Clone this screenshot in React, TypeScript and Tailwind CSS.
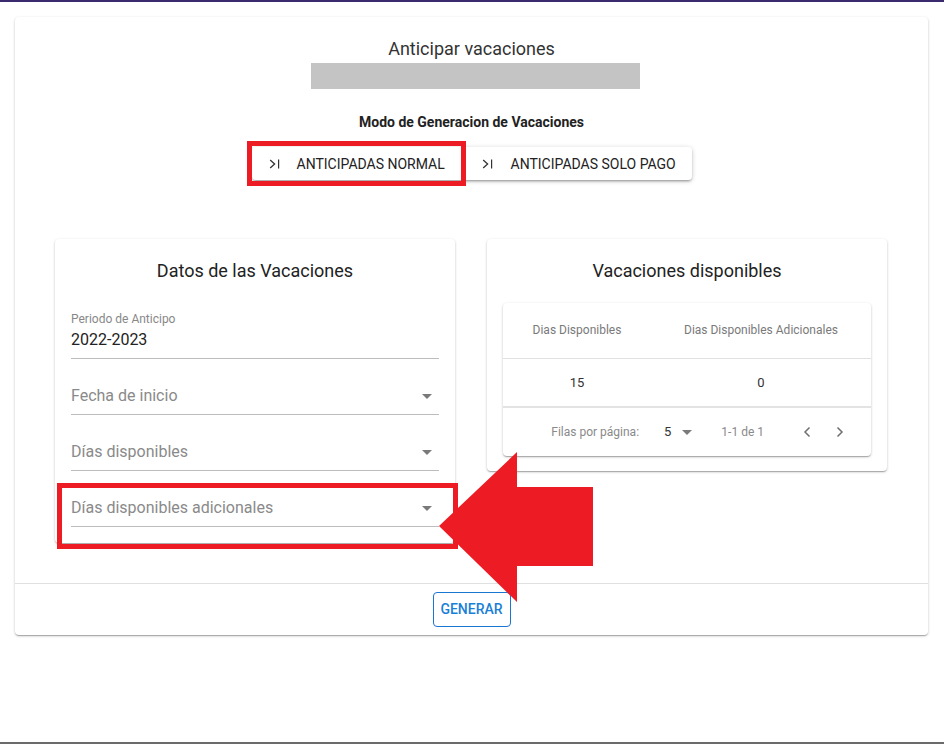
import React from "react";

const Chev = () => (
  <svg width="11" height="10" viewBox="0 0 11 10" fill="none" className="shrink-0">
    <polyline points="1.2,1 5.6,5 1.2,9" stroke="#333" strokeWidth="1.3" strokeLinejoin="miter" />
    <line x1="9.6" y1="0.6" x2="9.6" y2="9.4" stroke="#333" strokeWidth="1.2" />
  </svg>
);

const Caret = () => (
  <svg width="10" height="5" viewBox="0 0 10 5" className="shrink-0">
    <polygon points="0,0 10,0 5,5" fill="#7a7a7a" />
  </svg>
);

const paperShadow =
  "shadow-[0_1px_3px_rgba(0,0,0,0.2),0_1px_1px_rgba(0,0,0,0.14),0_2px_1px_-1px_rgba(0,0,0,0.12)]";

function SelectField({ label }: { label: string }) {
  return (
    <div className="flex items-center justify-between border-b border-[#bdbdbd] pt-[27px] pb-[8px]">
      <span className="text-[16px] leading-5 text-[#8a8a8a]">{label}</span>
      <span className="mr-[7px] flex items-center">
        <Caret />
      </span>
    </div>
  );
}

export default function App() {
  return (
    <div className="relative flex h-[744px] w-[944px] flex-col overflow-hidden bg-white font-[family-name:Roboto,Liberation_Sans,sans-serif]">
      <div className="h-[2px] bg-[#3b2a6e]" />

      <div className={`ml-[15px] mr-[16px] mt-[15px] rounded bg-white ${paperShadow}`}>
        <div className="flex flex-col items-center pt-[20px]">
          <h1 className="text-[18px] leading-6 text-[#333]">Anticipar vacaciones</h1>
          <div className="ml-[7px] mt-[2px] h-[26px] w-[329px] bg-[#c4c4c4]" />
          <p className="mt-[23px] text-[14px] font-bold leading-5 text-[#222]">
            Modo de Generacion de Vacaciones
          </p>
          <div className="mt-[15px] flex rounded bg-white shadow-[0_1px_5px_rgba(0,0,0,0.2),0_2px_2px_rgba(0,0,0,0.14),0_3px_1px_-2px_rgba(0,0,0,0.12)]">
            <button className="flex h-[33px] w-[210px] items-center gap-[17px] pl-[17px] text-[14px] uppercase leading-5 text-[#222]">
              <Chev />
              <span>Anticipadas Normal</span>
            </button>
            <button className="flex h-[33px] w-[230px] items-center gap-[18px] pl-[20px] text-[14px] uppercase leading-5 text-[#222]">
              <Chev />
              <span>Anticipadas Solo Pago</span>
            </button>
          </div>
        </div>

        <div className="mt-[59px] grid grid-cols-2 items-start gap-8 pl-10 pr-[41px]">
          <div className={`rounded bg-white px-4 pt-5 pb-4 ${paperShadow}`}>
            <h2 className="text-center text-[18px] leading-6 text-[#222]">Datos de las Vacaciones</h2>
            <div className="mt-7 border-b border-[#bdbdbd] pb-[8px]">
              <div className="text-[12px] leading-4 text-[#888]">Periodo de Anticipo</div>
              <div className="mt-[3px] text-[16px] leading-5 text-[#222]">2022-2023</div>
            </div>
            <SelectField label="Fecha de inicio" />
            <SelectField label="Días disponibles" />
            <SelectField label="Días disponibles adicionales" />
          </div>

          <div className={`rounded bg-white px-4 pt-5 pb-[15px] ${paperShadow}`}>
            <h2 className="text-center text-[18px] leading-6 text-[#222]">Vacaciones disponibles</h2>
            <div className={`mt-5 rounded bg-white ${paperShadow}`}>
              <div className="grid h-[56px] grid-cols-[148px_1fr] items-center border-b border-[#e0e0e0] pb-[2px] text-center text-[12px] text-[#7a7a7a]">
                <span>Dias Disponibles</span>
                <span>Dias Disponibles Adicionales</span>
              </div>
              <div className="grid h-[49px] grid-cols-[148px_1fr] items-center border-b-2 border-[#e3e3e3] text-center text-[13px] text-[#333]">
                <span>15</span>
                <span>0</span>
              </div>
              <div className="flex h-[48px] items-center justify-end pr-[19px] text-[12px] text-[#8a8a8a]">
                <span>Filas por página:</span>
                <span className="ml-[25px] text-[13px] text-[#333]">5</span>
                <span className="ml-[4px] flex w-6 justify-center">
                  <Caret />
                </span>
                <span className="ml-[22px]">1-1 de 1</span>
                <span className="ml-[31px] flex w-6 justify-center">
                  <svg width="24" height="24" viewBox="0 0 24 24" fill="none">
                    <path d="M14.5 7.5 10 12l4.5 4.5" stroke="#6f6f6f" strokeWidth="1.5" />
                  </svg>
                </span>
                <span className="ml-[9px] flex w-6 justify-center">
                  <svg width="24" height="24" viewBox="0 0 24 24" fill="none">
                    <path d="M9.5 7.5 14 12l-4.5 4.5" stroke="#6f6f6f" strokeWidth="1.5" />
                  </svg>
                </span>
              </div>
            </div>
          </div>
        </div>

        <div className="mt-10 flex justify-center border-t border-[#e0e0e0] py-2">
          <button className="h-[35px] w-[78px] rounded border border-[#1976d2] text-[14px] font-medium uppercase text-[#1a7fd8]">
            Generar
          </button>
        </div>
      </div>

      <div className="mt-auto h-[2px] bg-[#6b6b6b]" />

      {/* annotation overlays */}
      <div className="pointer-events-none absolute left-[247px] top-[141px] h-[45px] w-[219px] border-[5px] border-[#ed1c24]" />
      <div className="pointer-events-none absolute left-[57px] top-[483px] h-[66px] w-[401px] border-[5px] border-[#ed1c24]" />
      <svg
        className="pointer-events-none absolute left-0 top-0"
        width="944"
        height="744"
        viewBox="0 0 944 744"
      >
        <polygon
          points="439,526 517,452 517,487 593,487 593,566 517,566 517,602"
          fill="#ed1c24"
        />
      </svg>
    </div>
  );
}
